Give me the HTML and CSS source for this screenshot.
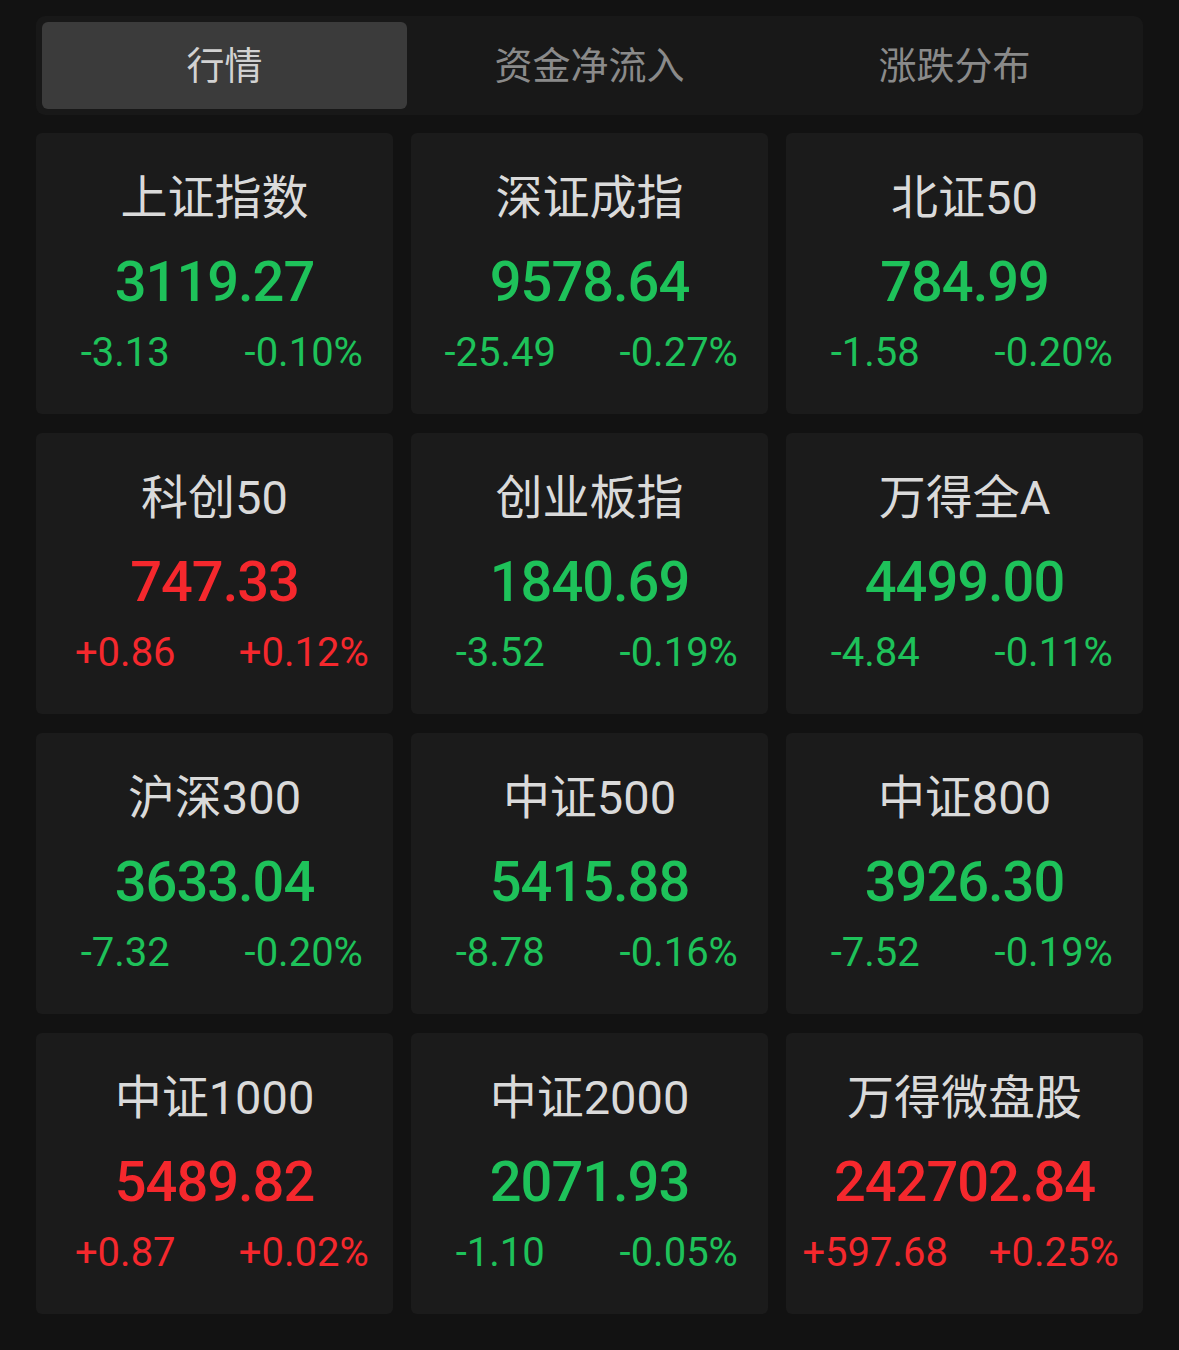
FILE: index.html
```html
<!DOCTYPE html>
<html lang="zh-CN">
<head>
<meta charset="utf-8">
<link rel="stylesheet" href="styles.css">
</head>
<body>
<div class="page">
  <div class="tabs">
    <div class="tab active">行情</div>
    <div class="tab">资金净流入</div>
    <div class="tab">涨跌分布</div>
  </div>
  <div class="grid">
    <div class="card"><div class="name">上证指数</div><div class="price down">3119.27</div><div class="chg down"><span>-3.13</span><span>-0.10%</span></div></div>
    <div class="card"><div class="name">深证成指</div><div class="price down">9578.64</div><div class="chg down"><span>-25.49</span><span>-0.27%</span></div></div>
    <div class="card"><div class="name">北证50</div><div class="price down">784.99</div><div class="chg down"><span>-1.58</span><span>-0.20%</span></div></div>
    <div class="card"><div class="name">科创50</div><div class="price up">747.33</div><div class="chg up"><span>+0.86</span><span>+0.12%</span></div></div>
    <div class="card"><div class="name">创业板指</div><div class="price down">1840.69</div><div class="chg down"><span>-3.52</span><span>-0.19%</span></div></div>
    <div class="card"><div class="name">万得全A</div><div class="price down">4499.00</div><div class="chg down"><span>-4.84</span><span>-0.11%</span></div></div>
    <div class="card"><div class="name">沪深300</div><div class="price down">3633.04</div><div class="chg down"><span>-7.32</span><span>-0.20%</span></div></div>
    <div class="card"><div class="name">中证500</div><div class="price down">5415.88</div><div class="chg down"><span>-8.78</span><span>-0.16%</span></div></div>
    <div class="card"><div class="name">中证800</div><div class="price down">3926.30</div><div class="chg down"><span>-7.52</span><span>-0.19%</span></div></div>
    <div class="card"><div class="name">中证1000</div><div class="price up">5489.82</div><div class="chg up"><span>+0.87</span><span>+0.02%</span></div></div>
    <div class="card"><div class="name">中证2000</div><div class="price down">2071.93</div><div class="chg down"><span>-1.10</span><span>-0.05%</span></div></div>
    <div class="card"><div class="name">万得微盘股</div><div class="price up">242702.84</div><div class="chg up"><span>+597.68</span><span>+0.25%</span></div></div>
  </div>
</div>
</body>
</html>
```
FILE: styles.css
```css
html, body {
  margin: 0;
  padding: 0;
  background: #121212;
}
body {
  font-family: Roboto, "Noto Sans CJK SC", sans-serif;
  width: 1179px;
  height: 1350px;
  overflow: hidden;
}
.page {
  padding: 16px 36px 0 36px;
}
.tabs {
  display: grid;
  grid-template-columns: repeat(3, 1fr);
  padding: 6px;
  background: #181818;
  border-radius: 9px;
  height: 87px;
}
.tab {
  display: flex;
  align-items: center;
  justify-content: center;
  padding-bottom: 6px;
  box-sizing: border-box;
  font-family: "Noto Sans CJK SC", sans-serif;
  font-size: 38px;
  color: #8a8a8a;
  border-radius: 6px;
}
.tab.active {
  background: #3b3b3b;
  color: #d2d2d2;
}
.grid {
  margin-top: 18px;
  display: grid;
  grid-template-columns: repeat(3, 357px);
  grid-auto-rows: 281px;
  column-gap: 18px;
  row-gap: 19px;
}
.card {
  background: #1b1b1b;
  border-radius: 6px;
  display: flex;
  flex-direction: column;
  align-items: stretch;
  padding-top: 37px;
  box-sizing: border-box;
}
.name {
  font-family: Roboto, "Noto Sans CJK SC", sans-serif;
  font-size: 47px;
  line-height: 56px;
  height: 56px;
  color: #dadada;
  text-align: center;
}
.price {
  font-family: Roboto, sans-serif;
  font-weight: 500;
  font-size: 56px;
  line-height: 56px;
  height: 56px;
  margin-top: 28px;
  letter-spacing: -1px;
  text-align: center;
}
.chg {
  display: grid;
  grid-template-columns: 1fr 1fr;
  font-family: Roboto, sans-serif;
  font-size: 40px;
  line-height: 48px;
  margin-top: 19px;
  text-align: center;
}
.down { color: #1ec25a; }
.up { color: #f5282d; }
```
